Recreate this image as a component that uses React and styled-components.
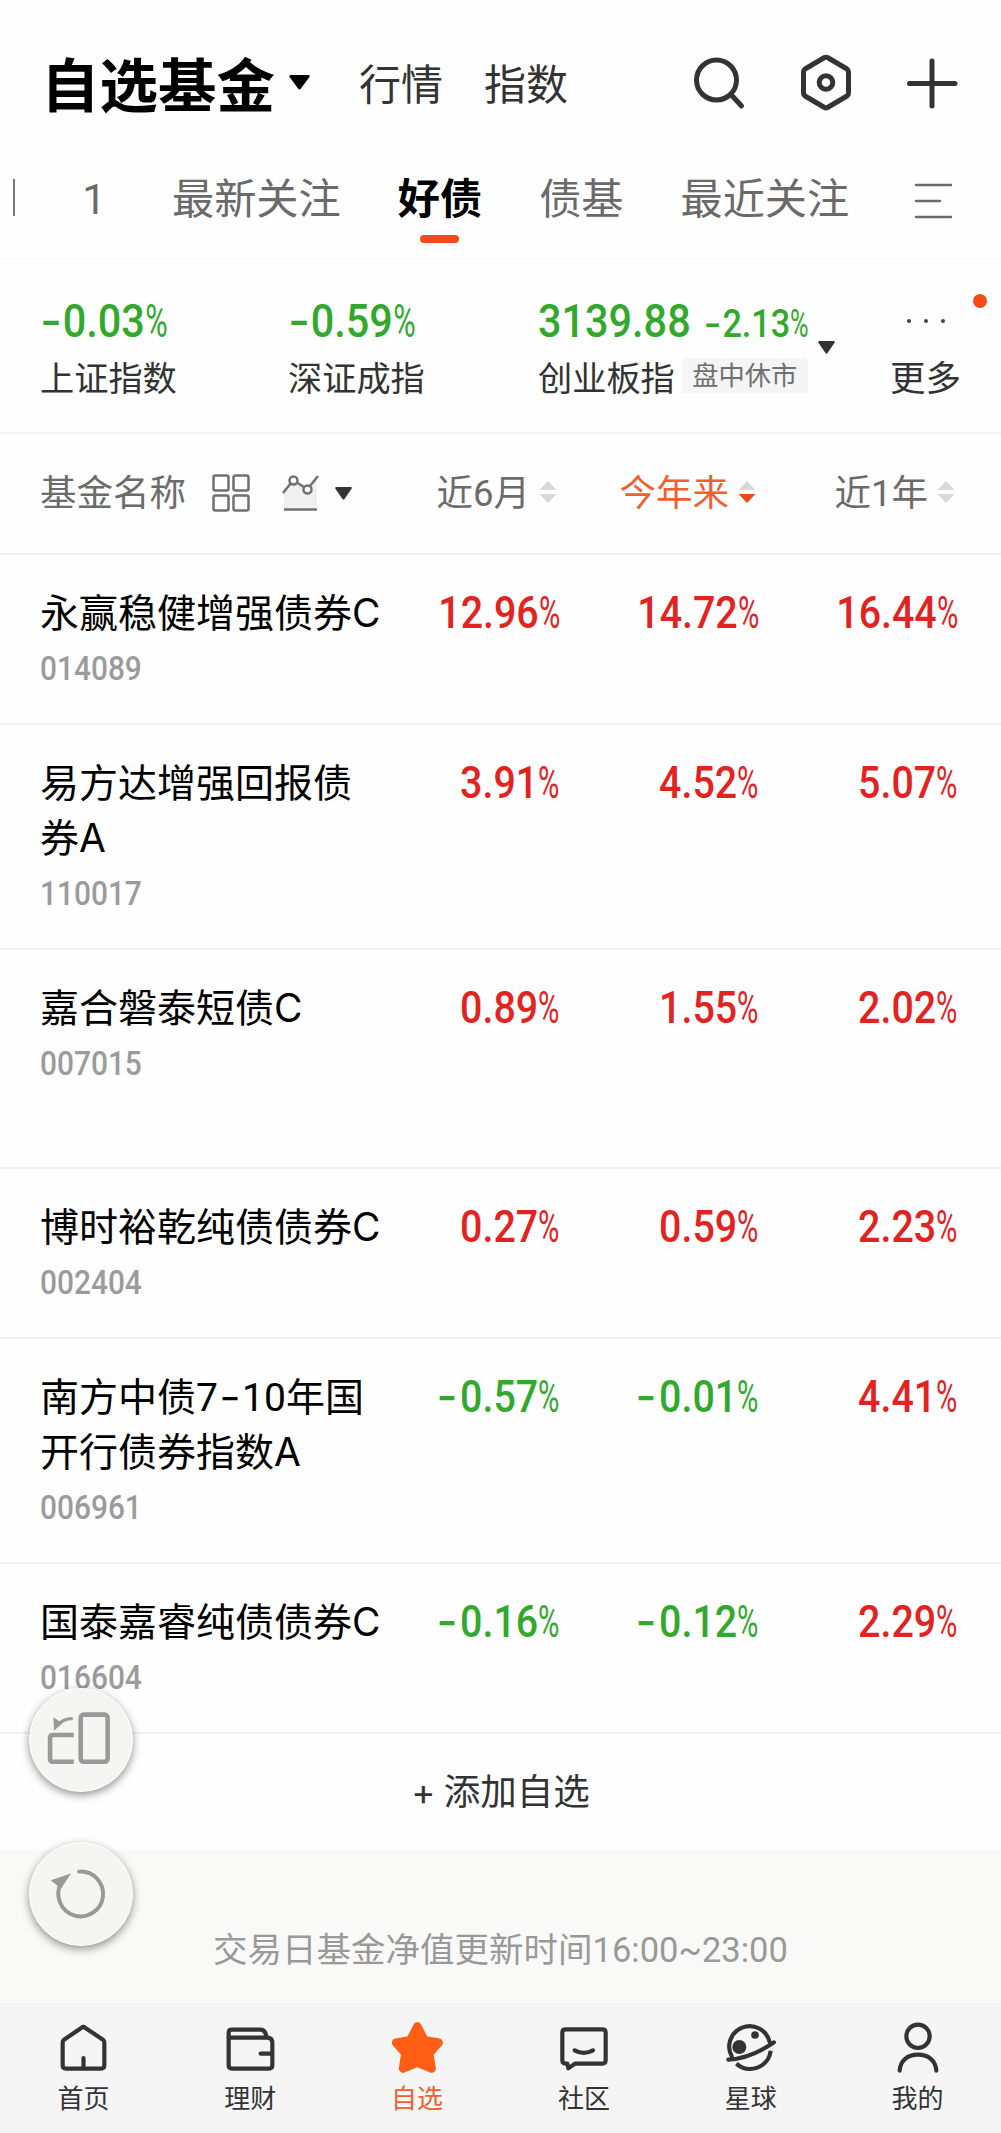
import styled, { createGlobalStyle } from "styled-components"

const GlobalStyle = createGlobalStyle`
  * {
    box-sizing: border-box;
  }
  body {
    margin: 0;
    background: #fefefe;
    font-family: "Noto Sans CJK SC", "Noto Sans", sans-serif;
    color: #333;
  }
`

const Page = styled.div`
  position: relative;
  width: 1001px;
  height: 2133px;
  overflow: hidden;
  display: flex;
  flex-direction: column;
  white-space: nowrap;
`

const Header = styled.header`
  height: 168px;
  padding: 0 40px 4px 41px;
  display: flex;
  align-items: center;
`

const Title = styled.h1`
  margin: 0;
  font-size: 58.5px;
  line-height: 80px;
  font-weight: 700;
  color: #000;
`

const HeaderLink = styled.a`
  margin-left: ${(props) => props.$gap}px;
  font-size: 42px;
  line-height: 60px;
`

const HeaderIcons = styled.div`
  margin-left: auto;
  display: flex;
  gap: 46px;
`

const Caret = styled.svg`
  flex: none;
  width: ${(props) => props.$w}px;
  height: ${(props) => props.$h}px;
  margin-left: ${(props) => props.$gap}px;
  fill: ${(props) => props.$color || "#333"};
`

const Tabs = styled.nav`
  height: 92px;
  padding-left: 13px;
  display: flex;
  align-items: flex-start;
  border-bottom: 2px solid #fafafa;
`

const TabDivider = styled.span`
  width: 2px;
  height: 37px;
  margin: 11px 58px 0 0;
  background: #777;
`

const Tab = styled.a`
  width: ${(props) => (props.$w ? props.$w + "px" : "auto")};
  margin-right: 57px;
  display: flex;
  flex-direction: column;
  align-items: center;
  font-size: 42.2px;
  line-height: 56px;
  font-weight: ${(props) => (props.$active ? 700 : 400)};
  color: ${(props) => (props.$active ? "#000" : "#6a6a6a")};
  &::after {
    content: "";
    width: 39px;
    height: 8px;
    margin-top: 11px;
    border-radius: 4px;
    background: ${(props) => (props.$active ? "#f64a1c" : "transparent")};
  }
`

const TabMenu = styled.svg`
  margin: 14px 0 0 8px;
`

const Indices = styled.section`
  height: 174px;
  padding: 33px 0 0 40px;
  display: flex;
  border-bottom: 2px solid #f3f3f3;
`

const IndexItem = styled.div`
  width: ${(props) => props.$w}px;
`

const IndexValue = styled.div`
  height: 55px;
  display: flex;
  align-items: baseline;
  justify-content: space-between;
  color: #32a92d;
  > :first-child {
    min-width: 0;
  }
  > :last-child {
    flex: none;
  }
`

const IndexName = styled.div`
  height: 56px;
  display: flex;
  align-items: center;
  font-size: 34.2px;
  line-height: 52px;
`

const Status = styled.span`
  width: 126px;
  height: 35px;
  margin: 0 0 2px 7px;
  border-radius: 5px 5px 0 0;
  background: #f4f5f4;
  font-size: 26.3px;
  line-height: 31px;
  text-align: center;
  color: #707070;
`

const IndexCaret = styled.div`
  width: 82px;
  padding-top: 48px;
  display: flex;
`

const More = styled.div`
  position: relative;
  width: 90px;
  font-size: 35.5px;
`

const MoreDots = styled.div`
  height: 57px;
  padding: 26px 0 0 17px;
  display: flex;
  gap: 13px;
  span {
    width: 4px;
    height: 4px;
    border-radius: 50%;
    background: #444;
  }
`

const RedDot = styled.i`
  position: absolute;
  top: 1px;
  left: 83px;
  width: 14px;
  height: 14px;
  border-radius: 50%;
  background: #f94a18;
`

const columns = "352px 167px 199px 199px"

const TableHead = styled.div`
  height: 121px;
  padding: 0 0 5px 40px;
  display: grid;
  grid-template-columns: ${columns};
  align-items: center;
  border-bottom: 2px solid #f1f1f1;
  font-size: 36.5px;
  line-height: 54px;
  color: #6b6b6b;
`

const HeadName = styled.div`
  display: flex;
  align-items: center;
  svg {
    position: relative;
    top: 2px;
  }
`

const HeadCell = styled.div`
  padding-right: 2px;
  display: flex;
  justify-content: flex-end;
  align-items: center;
  gap: 9px;
  color: ${(props) => (props.$active ? "#f0602f" : "inherit")};
  svg {
    position: relative;
    top: 1px;
    flex: none;
  }
`

const Row = styled.div`
  height: ${(props) => props.$h}px;
  padding: 28px 0 0 40px;
  display: grid;
  grid-template-columns: ${columns};
  align-content: start;
  border-bottom: 2px solid #f1f1f1;
`

const FundName = styled.div`
  font-size: 39px;
  line-height: 55px;
  color: #000;
`

const Latin = styled.span`
  font-family: Inter, sans-serif;
  line-height: 1;
`

const Figures = styled(Latin)`
  font-family: Roboto, sans-serif;
`

const Dash = styled(Latin)`
  display: inline-block;
  margin: 0 0.08em;
  transform: scaleX(1.2);
`

// Digits are narrowed, the type is close to DIN
const Digits = styled.span`
  display: inline-block;
  font-family: Roboto, sans-serif;
  font-size: ${(props) => props.$size}px;
  font-weight: 500;
  line-height: 56px;
  transform: scaleX(${(props) => props.$scale || 0.9});
  transform-origin: ${(props) => props.$origin || "left"} center;
`

const Minus = styled.span`
  display: inline-block;
  width: 0.55em;
  font-family: Inter, sans-serif;
  line-height: 1;
  text-align: left;
  transform: scaleX(1.15);
  transform-origin: left center;
`

const Percent = styled.span`
  display: inline-block;
  width: 0.52em;
  font-weight: 400;
  transform: scaleX(0.74);
  transform-origin: left center;
`

const Code = styled.div`
  height: 56px;
  padding-top: 3px;
  color: #9b9b9b;
`

const Cell = styled.div`
  padding-top: 2px;
  text-align: right;
  color: ${(props) => (props.$down ? "#32a92d" : "#e2231f")};
  ${Minus} {
    width: 0.6em;
  }
`

const AddButton = styled.button`
  height: 116px;
  padding: 0 0 5px;
  border: 0;
  background: none;
  font-family: inherit;
  font-size: 36.5px;
  color: #333;
`

const Notice = styled.div`
  height: 153px;
  padding-top: 71px;
  background: #f9f9f8;
  font-size: 34.5px;
  line-height: 52px;
  text-align: center;
  color: #999;
`

const BottomNav = styled.nav`
  flex: 1;
  padding-top: 15px;
  display: grid;
  grid-template-columns: repeat(6, 1fr);
  background: #f5f5f5;
`

const NavItem = styled.a`
  display: flex;
  flex-direction: column;
  align-items: center;
  font-size: 26px;
  line-height: 38px;
  color: ${(props) => (props.$active ? "#ee6130" : "#333")};
`

const FloatButton = styled.button`
  position: absolute;
  left: 29px;
  top: ${(props) => props.$top}px;
  width: 104px;
  height: 104px;
  padding: 0;
  border: 1px solid #fff;
  border-radius: 50%;
  background: #f5f5f4;
  box-shadow: 0 3px 9px rgba(0, 0, 0, 0.42);
`

// Latin letters and digits inside Chinese text get their own face
function Mixed({ text }) {
  return text.split(/([A-Za-z+]+|-|[0-9:~]+)/).map((part, i) => {
    if (i % 2 === 0) return part
    if (part === "-") return <Dash key={i}>{part}</Dash>
    if (/[0-9]/.test(part)) return <Figures key={i}>{part}</Figures>
    return <Latin key={i}>{part}</Latin>
  })
}

function Num({ value, size, scale, origin }) {
  const down = value.startsWith("-")
  const percent = value.endsWith("%")
  return (
    <Digits $size={size} $scale={scale} $origin={origin}>
      {down && <Minus>-</Minus>}
      {value.replace("-", "").replace("%", "")}
      {percent && <Percent>%</Percent>}
    </Digits>
  )
}

function DownCaret({ w, h, gap, color }) {
  return (
    <Caret viewBox="0 0 20 15" preserveAspectRatio="none" $w={w} $h={h} $gap={gap} $color={color}>
      <path d="M1.5 0H18.5Q20.5 .5 19.3 2.2L11.2 13.8Q10 15.4 8.8 13.8L.7 2.2Q-.5 .5 1.5 0Z" />
    </Caret>
  )
}

function Sort({ active }) {
  return (
    <svg width="18" height="22" viewBox="0 0 18 22">
      <path d="M9 0L17.5 9H.5Z" fill="#d9d9d9" />
      <path d="M9 22L17.5 13H.5Z" fill={active ? "#ee4a16" : "#d9d9d9"} />
    </svg>
  )
}

function NavIcon({ children }) {
  return (
    <svg
      width="60"
      height="60"
      viewBox="0 0 180 180"
      fill="none"
      stroke="#333"
      strokeWidth="12.5"
      strokeLinecap="round"
      strokeLinejoin="round"
    >
      {children}
    </svg>
  )
}

const funds = [
  { name: ["永赢稳健增强债券C"], code: "014089", h: 170, values: ["12.96%", "14.72%", "16.44%"] },
  { name: ["易方达增强回报债", "券A"], code: "110017", h: 225, values: ["3.91%", "4.52%", "5.07%"] },
  { name: ["嘉合磐泰短债C"], code: "007015", h: 219, values: ["0.89%", "1.55%", "2.02%"] },
  { name: ["博时裕乾纯债债券C"], code: "002404", h: 170, values: ["0.27%", "0.59%", "2.23%"] },
  { name: ["南方中债7-10年国", "开行债券指数A"], code: "006961", h: 225, values: ["-0.57%", "-0.01%", "4.41%"] },
  { name: ["国泰嘉睿纯债债券C"], code: "016604", h: 170, values: ["-0.16%", "-0.12%", "2.29%"] },
]

const navItems = [
  {
    label: "首页",
    icon: (
      <>
        <path d="M86 29Q91 25 96 29L150 65Q154 68 154 74V142Q154 152 144 152H39Q29 152 29 142V74Q29 68 33 65Z" />
        <path d="M91.500 120V148" />
      </>
    ),
  },
  {
    label: "理财",
    icon: (
      <>
        <path d="M26 59V142Q26 152 36 152H147Q157 152 157 142V75Q157 59 141 59Z" />
        <path d="M26 59V44Q26 35 35 35H122Q137 36 139 57M122 107H155" />
      </>
    ),
  },
  {
    label: "自选",
    active: true,
    icon: (
      <path
        d="M91 25L112 66L155 74L127 106L134 152L91 134L48 152L55 106L27 74L70 66Z"
        fill="#ff5e14"
        stroke="#ff5e14"
        strokeWidth="25"
      />
    ),
  },
  {
    label: "社区",
    icon: (
      <>
        <path d="M35 34H145Q155 34 155 44V127Q155 137 145 137H63L43 151L40 137H35Q25 137 25 127V44Q25 34 35 34Z" />
        <path d="M62 97Q89 112 117 97" />
      </>
    ),
  },
  {
    label: "星球",
    icon: (
      <>
        <path d="M33 117A61.500 61.500 0 1 1 146 72" />
        <path d="M149 98A62 62 0 0 1 46 137" strokeLinecap="butt" />
        <path d="M22 125Q90 121 159 73" />
        <circle cx="55" cy="87" r="21" fill="#333" stroke="none" />
        <circle cx="102" cy="51" r="11.500" fill="#333" stroke="none" />
      </>
    ),
  },
  {
    label: "我的",
    icon: (
      <>
        <circle cx="90" cy="55" r="35" />
        <path d="M35 158C37 127 59 110 90 110S143 127 145 158" />
      </>
    ),
  },
]

function App() {
  return (
    <>
      <GlobalStyle />
      <Page>
        <Header>
          <Title>自选基金</Title>
          <DownCaret w={21} h={15} gap={14} color="#000" />
          <HeaderLink $gap={49}>行情</HeaderLink>
          <HeaderLink $gap={41}>指数</HeaderLink>
          <HeaderIcons>
            <svg width="60" height="60" fill="none" stroke="#333" strokeWidth="5" strokeLinecap="round">
              <circle cx="27.500" cy="28" r="20" />
              <path d="M42 42.500L52.500 54" />
            </svg>
            <svg width="60" height="60" fill="none" stroke="#333" strokeWidth="5" strokeLinejoin="round">
              <path d="M29.500 5.500Q31 5 32.500 5.500L52 17Q53.500 18 53.500 20V41Q53.500 43 52 44L32.500 55.500Q31 56.500 29.500 55.500L10 44Q8.500 43 8.500 41V20Q8.500 18 10 17Z" />
              <circle cx="31" cy="30.500" r="6.800" />
            </svg>
            <svg width="60" height="60" fill="none" stroke="#333" strokeWidth="5" strokeLinecap="round">
              <path d="M31 9V54M8.500 31.500H54" />
            </svg>
          </HeaderIcons>
        </Header>

        <Tabs>
          <TabDivider />
          <Tab $w={42}>
            <span>
              <Mixed text="1" />
            </span>
          </Tab>
          <Tab>最新关注</Tab>
          <Tab $active>好债</Tab>
          <Tab>债基</Tab>
          <Tab>最近关注</Tab>
          <TabMenu width="40" height="38" stroke="#6a6a6a" strokeWidth="2.500" strokeLinecap="round">
            <path d="M2 3H37M2 19H26M2 35H37" />
          </TabMenu>
        </Tabs>

        <Indices>
          <IndexItem $w={248}>
            <IndexValue>
              <Num value="-0.03%" size={46} />
            </IndexValue>
            <IndexName>上证指数</IndexName>
          </IndexItem>
          <IndexItem $w={250}>
            <IndexValue>
              <Num value="-0.59%" size={46} />
            </IndexValue>
            <IndexName>深证成指</IndexName>
          </IndexItem>
          <IndexItem $w={270}>
            <IndexValue>
              <Num value="3139.88" size={46} />
              <Num value="-2.13%" size={38} origin="right" />
            </IndexValue>
            <IndexName>
              创业板指
              <Status>盘中休市</Status>
            </IndexName>
          </IndexItem>
          <IndexCaret>
            <DownCaret w={17} h={13} gap={10} />
          </IndexCaret>
          <More>
            <MoreDots>
              <span />
              <span />
              <span />
            </MoreDots>
            更多
            <RedDot />
          </More>
        </Indices>

        <TableHead>
          <HeadName>
            基金名称
            <svg
              width="38"
              height="38"
              fill="none"
              stroke="#707070"
              strokeWidth="2.500"
              style={{ marginLeft: 26 }}
            >
              <rect x="1.500" y="1.500" width="15" height="15" rx="2" />
              <rect x="21.500" y="1.500" width="15" height="15" rx="2" />
              <rect x="1.500" y="21.500" width="15" height="15" rx="2" />
              <rect x="21.500" y="21.500" width="15" height="15" rx="2" />
            </svg>
            <svg width="38" height="38" fill="none" stroke="#707070" strokeWidth="2.500" style={{ marginLeft: 32 }}>
              <path d="M2 19L11 8L26 15L35 5V34H2Z" fill="#f0f0f0" stroke="none" />
              <path d="M1 19L9 9M14 8L22 13M28 12L36 2M2 35.500H35" />
              <circle cx="11.500" cy="6.500" r="4" fill="#fefefe" />
              <circle cx="25.500" cy="15.500" r="4" fill="#fefefe" />
            </svg>
            <DownCaret w={17} h={13} gap={15} />
          </HeadName>
          <HeadCell>
            <span>
              <Mixed text="近6月" />
            </span>
            <Sort />
          </HeadCell>
          <HeadCell $active>
            今年来
            <Sort active />
          </HeadCell>
          <HeadCell>
            <span>
              <Mixed text="近1年" />
            </span>
            <Sort />
          </HeadCell>
        </TableHead>

        {funds.map((fund) => (
          <Row key={fund.code} $h={fund.h}>
            <div>
              {fund.name.map((line) => (
                <FundName key={line}>
                  <Mixed text={line} />
                </FundName>
              ))}
              <Code>
                <Num value={fund.code} size={33} scale={0.905} />
              </Code>
            </div>
            {fund.values.map((value) => (
              <Cell key={value} $down={value.startsWith("-")}>
                <Num value={value} size={45} scale={0.875} origin="right" />
              </Cell>
            ))}
          </Row>
        ))}

        <AddButton>
          <Mixed text="+ 添加自选" />
        </AddButton>
        <Notice>
          <Mixed text="交易日基金净值更新时间16:00~23:00" />
        </Notice>

        <BottomNav>
          {navItems.map((item) => (
            <NavItem key={item.label} $active={item.active}>
              <NavIcon>{item.icon}</NavIcon>
              {item.label}
            </NavItem>
          ))}
        </BottomNav>

        <FloatButton $top={1688}>
          <svg width="102" height="102" viewBox="0 0 310 310" fill="none" stroke="#999" strokeWidth="14">
            <rect x="154" y="78" width="82" height="143" rx="9" />
            <path d="M133 140H70Q61 140 61 149V212Q61 221 70 221H133" />
            <path d="M126 90Q104 90 86 108" strokeWidth="10" strokeLinecap="round" />
            <path d="M71 86L98 104L73 127Z" fill="#999" stroke="none" />
          </svg>
        </FloatButton>
        <FloatButton $top={1842}>
          <svg width="102" height="102" viewBox="0 0 310 310" fill="none" stroke="#999" strokeWidth="12">
            <path d="M149 87A68 68 0 1 1 94 123" strokeLinecap="round" />
            <path d="M63 113L125 93L94 138Z" fill="#999" stroke="none" />
          </svg>
        </FloatButton>
      </Page>
    </>
  )
}

export default App
